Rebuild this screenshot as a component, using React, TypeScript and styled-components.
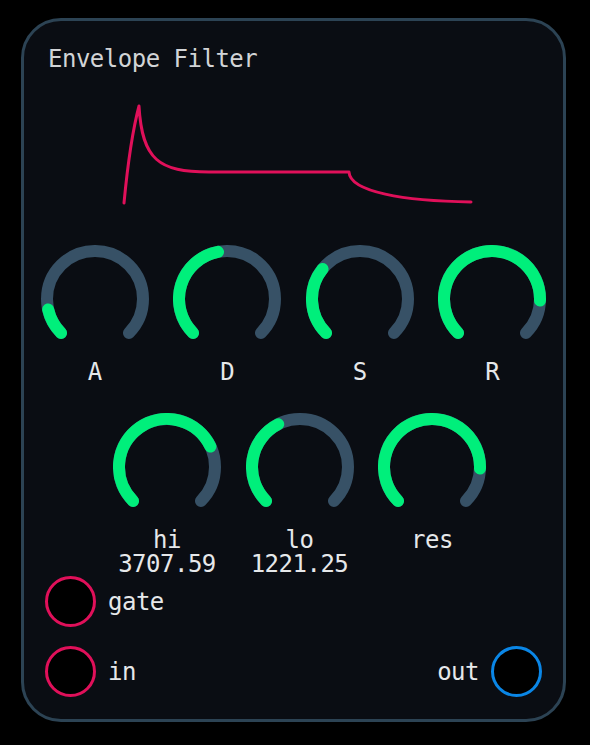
import React from "react";
import styled, { createGlobalStyle } from "styled-components";

const GlobalStyle = createGlobalStyle`
  html, body { margin: 0; padding: 0; background: #000; }
  body { font-family: "DejaVu Sans Mono", "Liberation Mono", monospace; }
  * { box-sizing: border-box; }
`;

const Panel = styled.div`
  margin: 18px 0 0 21px;
  width: 545px;
  height: 704px;
  border: 3px solid #2c4354;
  border-radius: 40px;
  background: #0a0d13;
  padding: 24px 0 0 0;
  display: flex;
  flex-direction: column;
`;

const Title = styled.div`
  padding-left: 24px;
  font-size: 24px;
  line-height: 28px;
  letter-spacing: -0.5px;
  color: #d2d4d6;
`;

const EnvelopeSvg = styled.svg`
  display: block;
  margin-top: 17px;
  width: 539px;
  height: 125px;
`;

const KnobRow = styled.div<{ $top: number; $shift: number }>`
  display: flex;
  justify-content: center;
  margin-top: ${(p) => p.$top}px;
  padding-left: ${(p) => p.$shift}px;
`;

const KnobCell = styled.div`
  width: 132.5px;
  display: flex;
  flex-direction: column;
  align-items: center;
`;

const KnobSvg = styled.svg`
  display: block;
  width: 108px;
  height: 108px;
`;

const Label = styled.div`
  margin-top: 7px;
  font-size: 24px;
  line-height: 24px;
  letter-spacing: -0.5px;
  color: #e6e8ea;
  text-align: center;
  white-space: nowrap;
`;

const Value = styled(Label)`
  margin-top: 0;
`;

const PortRow = styled.div<{ $top: number }>`
  display: flex;
  align-items: center;
  justify-content: space-between;
  padding: 0 21px;
  margin-top: ${(p) => p.$top}px;
`;

const PortGroup = styled.div`
  display: flex;
  align-items: center;
  gap: 12px;
`;

const Jack = styled.div<{ $color: string }>`
  width: 51px;
  height: 51px;
  border-radius: 50%;
  border: 3px solid ${(p) => p.$color};
  background: #000;
`;

const PortLabel = styled.span`
  font-size: 24px;
  line-height: 28px;
  letter-spacing: -0.5px;
  color: #e6e8ea;
`;

const PINK = "#e0105a";
const BLUE = "#0a86e6";
const GREEN = "#00ef7b";
const TRACK = "#375166";

function polar(deg: number, r = 48, c = 54) {
  const a = (deg * Math.PI) / 180;
  return [c + r * Math.sin(a), c - r * Math.cos(a)];
}

function arc(from: number, to: number) {
  const [x1, y1] = polar(from);
  const [x2, y2] = polar(to);
  const large = to - from > 180 ? 1 : 0;
  return `M ${x1.toFixed(2)} ${y1.toFixed(2)} A 48 48 0 ${large} 1 ${x2.toFixed(2)} ${y2.toFixed(2)}`;
}

function Knob({ label, value, readout }: { label: string; value: number; readout?: string }) {
  const end = -135 + 270 * value;
  return (
    <KnobCell>
      <KnobSvg viewBox="0 0 108 108">
        <path d={arc(-135, 135)} fill="none" stroke={TRACK} strokeWidth={12} strokeLinecap="round" />
        <path d={arc(-135, end)} fill="none" stroke={GREEN} strokeWidth={12} strokeLinecap="round" />
      </KnobSvg>
      <Label>{label}</Label>
      {readout && <Value>{readout}</Value>}
    </KnobCell>
  );
}

function Port({ label, color, side }: { label: string; color: string; side: "left" | "right" }) {
  return (
    <PortGroup>
      {side === "right" && <PortLabel>{label}</PortLabel>}
      <Jack $color={color} />
      {side === "left" && <PortLabel>{label}</PortLabel>}
    </PortGroup>
  );
}

export default function App() {
  return (
    <>
      <GlobalStyle />
      <Panel>
        <Title>Envelope Filter</Title>
        <EnvelopeSvg viewBox="0 0 539 125">
          <path
            d="M 100 113 Q 106 50 115 16 C 118 70 135 82 185 82 L 325 82 C 326 102 380 111 447 112"
            fill="none"
            stroke={PINK}
            strokeWidth={3}
            strokeLinecap="round"
            strokeLinejoin="round"
          />
        </EnvelopeSvg>
        <KnobRow $top={30} $shift={0}>
          <Knob label="A" value={0.12} />
          <Knob label="D" value={0.46} />
          <Knob label="S" value={0.31} />
          <Knob label="R" value={0.84} />
        </KnobRow>
        <KnobRow $top={29} $shift={12}>
          <Knob label="hi" value={0.74} readout="3707.59" />
          <Knob label="lo" value={0.4} readout="1221.25" />
          <Knob label="res" value={0.84} />
        </KnobRow>
        <PortRow $top={0}>
          <Port label="gate" color={PINK} side="left" />
        </PortRow>
        <PortRow $top={19}>
          <Port label="in" color={PINK} side="left" />
          <Port label="out" color={BLUE} side="right" />
        </PortRow>
      </Panel>
    </>
  );
}
